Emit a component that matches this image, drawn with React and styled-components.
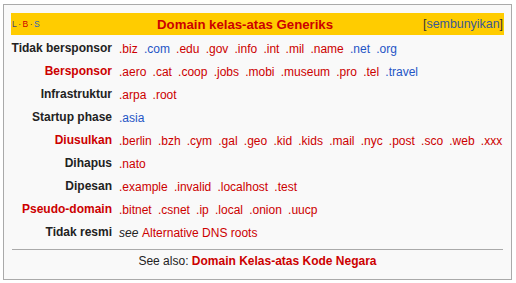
import React from 'react';
import styled, { createGlobalStyle } from 'styled-components';

const GlobalStyle = createGlobalStyle`
  body {
    margin: 0;
    background: #fff;
    font-family: "Liberation Sans", Arial, sans-serif;
    color: #222;
  }
`;

const Page = styled.div`
  padding: 4px 0 0 3px;
`;

const Navbox = styled.div`
  box-sizing: border-box;
  width: 509px;
  height: 276px;
  border: 1px solid #aaa;
  background: #f9f9f9;
  padding: 8px 7px 0 7px;
`;

const Header = styled.div`
  display: flex;
  align-items: center;
  height: 22px;
  background: #fc0;
`;

const Navbar = styled.div`
  width: 55px;
  padding-left: 1px;
  font-size: 8.5px;
  white-space: nowrap;
`;

const NavLetter = styled.span`
  color: ${p => p.$color};
`;

const Dot = styled.span`
  color: #444;
  margin: 0 1.5px;
`;

const Title = styled.div`
  flex: 1;
  text-align: center;
  font-size: 13.2px;
  font-weight: bold;
  color: #c00;
  white-space: nowrap;
`;

const Toggle = styled.div`
  font-size: 12.4px;
  color: #333;
  padding-right: 1px;
  white-space: nowrap;

  span {
    color: #3b5a94;
  }
`;

const Groups = styled.div`
  display: grid;
  grid-template-columns: 104px 1fr;
  column-gap: 2px;
  row-gap: 2px;
  margin-top: 3px;
`;

const Label = styled.div`
  height: 21px;
  line-height: 21px;
  padding-right: 3px;
  text-align: right;
  font-size: 12px;
  font-weight: bold;
  white-space: nowrap;
  color: ${p => (p.$red ? '#c00' : '#222')};
`;

const List = styled.div`
  display: flex;
  align-items: center;
  gap: 6.2px;
  height: 21px;
  padding-left: 2px;
  font-size: 12px;
  white-space: nowrap;
`;

const Link = styled.span`
  color: ${p => (p.$blue ? '#1f55c6' : '#c00')};
`;

const Plain = styled.span`
  color: #222;
  font-style: ${p => (p.$italic ? 'italic' : 'normal')};
  margin-right: -2.5px;
`;

const Rule = styled.div`
  height: 1px;
  margin: 6px 1px 0 1px;
  background: #aaa;
`;

const Footer = styled.div`
  text-align: center;
  font-size: 12px;
  line-height: 22px;
  color: #222;

  b {
    color: #c00;
  }
`;

const groups = [
  {
    label: 'Tidak bersponsor',
    items: ['.biz', '*.com', '.edu', '.gov', '.info', '.int', '.mil', '.name', '*.net', '*.org'],
  },
  {
    label: 'Bersponsor',
    red: true,
    items: ['.aero', '.cat', '.coop', '.jobs', '.mobi', '.museum', '.pro', '.tel', '*.travel'],
  },
  { label: 'Infrastruktur', items: ['.arpa', '.root'] },
  { label: 'Startup phase', items: ['*.asia'] },
  {
    label: 'Diusulkan',
    red: true,
    items: ['.berlin', '.bzh', '.cym', '.gal', '.geo', '.kid', '.kids', '.mail', '.nyc', '.post', '.sco', '.web', '.xxx'],
  },
  { label: 'Dihapus', items: ['.nato'] },
  { label: 'Dipesan', items: ['.example', '.invalid', '.localhost', '.test'] },
  {
    label: 'Pseudo-domain',
    red: true,
    items: ['.bitnet', '.csnet', '.ip', '.local', '.onion', '.uucp'],
  },
];

export default function App() {
  return (
    <>
      <GlobalStyle />
      <Page>
        <Navbox>
          <Header>
            <Navbar>
              <NavLetter $color="#4a3f7a">L</NavLetter>
              <Dot>·</Dot>
              <NavLetter $color="#c00">B</NavLetter>
              <Dot>·</Dot>
              <NavLetter $color="#3366bb">S</NavLetter>
            </Navbar>
            <Title>Domain kelas-atas Generiks</Title>
            <Toggle>
              [<span>sembunyikan</span>]
            </Toggle>
          </Header>
          <Groups>
            {groups.map(g => (
              <React.Fragment key={g.label}>
                <Label $red={g.red}>{g.label}</Label>
                <List>
                  {g.items.map(it => {
                    const blue = it.startsWith('*');
                    return (
                      <Link key={it} $blue={blue}>
                        {blue ? it.slice(1) : it}
                      </Link>
                    );
                  })}
                </List>
              </React.Fragment>
            ))}
            <Label>Tidak resmi</Label>
            <List>
              <Plain $italic>see</Plain>
              <Link>Alternative DNS roots</Link>
            </List>
          </Groups>
          <Rule />
          <Footer>
            See also: <b>Domain Kelas-atas Kode Negara</b>
          </Footer>
        </Navbox>
      </Page>
    </>
  );
}
